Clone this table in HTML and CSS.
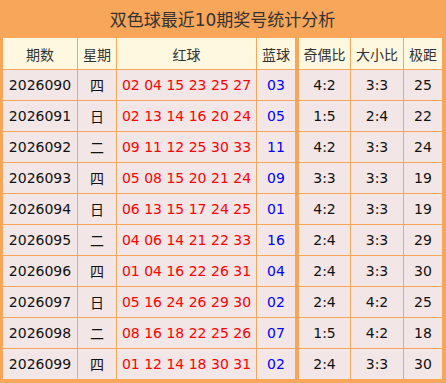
FILE: index.html
```html
<!DOCTYPE html>
<html lang="zh">
<head>
<meta charset="utf-8">
<title>双色球最近10期奖号统计分析</title>
<link rel="stylesheet" href="styles.css">
</head>
<body>
<div class="board">
  <h1 class="title">双色球最近10期奖号统计分析</h1>
  <div class="grid">
    <div class="cell head">期数</div><div class="cell head">星期</div><div class="cell head">红球</div><div class="cell head">蓝球</div><div class="cell head split">奇偶比</div><div class="cell head">大小比</div><div class="cell head">极距</div>

    <div class="cell">2026090</div><div class="cell">四</div><div class="cell red">02 04 15 23 25 27</div><div class="cell blue">03</div><div class="cell split">4:2</div><div class="cell">3:3</div><div class="cell">25</div>
    <div class="cell">2026091</div><div class="cell">日</div><div class="cell red">02 13 14 16 20 24</div><div class="cell blue">05</div><div class="cell split">1:5</div><div class="cell">2:4</div><div class="cell">22</div>
    <div class="cell">2026092</div><div class="cell">二</div><div class="cell red">09 11 12 25 30 33</div><div class="cell blue">11</div><div class="cell split">4:2</div><div class="cell">3:3</div><div class="cell">24</div>
    <div class="cell">2026093</div><div class="cell">四</div><div class="cell red">05 08 15 20 21 24</div><div class="cell blue">09</div><div class="cell split">3:3</div><div class="cell">3:3</div><div class="cell">19</div>
    <div class="cell">2026094</div><div class="cell">日</div><div class="cell red">06 13 15 17 24 25</div><div class="cell blue">01</div><div class="cell split">4:2</div><div class="cell">3:3</div><div class="cell">19</div>
    <div class="cell">2026095</div><div class="cell">二</div><div class="cell red">04 06 14 21 22 33</div><div class="cell blue">16</div><div class="cell split">2:4</div><div class="cell">3:3</div><div class="cell">29</div>
    <div class="cell">2026096</div><div class="cell">四</div><div class="cell red">01 04 16 22 26 31</div><div class="cell blue">04</div><div class="cell split">2:4</div><div class="cell">3:3</div><div class="cell">30</div>
    <div class="cell">2026097</div><div class="cell">日</div><div class="cell red">05 16 24 26 29 30</div><div class="cell blue">02</div><div class="cell split">2:4</div><div class="cell">4:2</div><div class="cell">25</div>
    <div class="cell">2026098</div><div class="cell">二</div><div class="cell red">08 16 18 22 25 26</div><div class="cell blue">07</div><div class="cell split">1:5</div><div class="cell">4:2</div><div class="cell">18</div>
    <div class="cell">2026099</div><div class="cell">四</div><div class="cell red">01 12 14 18 30 31</div><div class="cell blue">02</div><div class="cell split">2:4</div><div class="cell">3:3</div><div class="cell">30</div>
  </div>
</div>
</body>
</html>
```
FILE: styles.css
```css
* { box-sizing: border-box; }
html, body { margin: 0; padding: 0; background: #ffffff; }
body {
  font-family: "DejaVu Sans", "Noto Sans CJK SC", sans-serif;
  font-size: 14px;
  color: #111111;
}
.board {
  width: 446px;
  background: #f7a65a;
  padding: 0 4px 4px 3px;
}
.title {
  margin: 0;
  height: 38px;
  padding-top: 2px;
  line-height: 36px;
  text-align: center;
  font-size: 17px;
  font-weight: normal;
  color: #333333;
}
.grid {
  display: grid;
  grid-template-columns: 74px 38px 139px 38px 54px 52px 38px;
  grid-template-rows: 31px;
  grid-auto-rows: 30px;
  gap: 1px;
}
.cell {
  display: flex;
  align-items: center;
  justify-content: center;
  background: #f3e6e6;
  white-space: nowrap;
}
.head {
  background: #fff8e0;
  color: #333333;
}
.split { margin-left: 3px; }
.red { color: #ff0000; }
.blue { color: #0000ff; }
```
